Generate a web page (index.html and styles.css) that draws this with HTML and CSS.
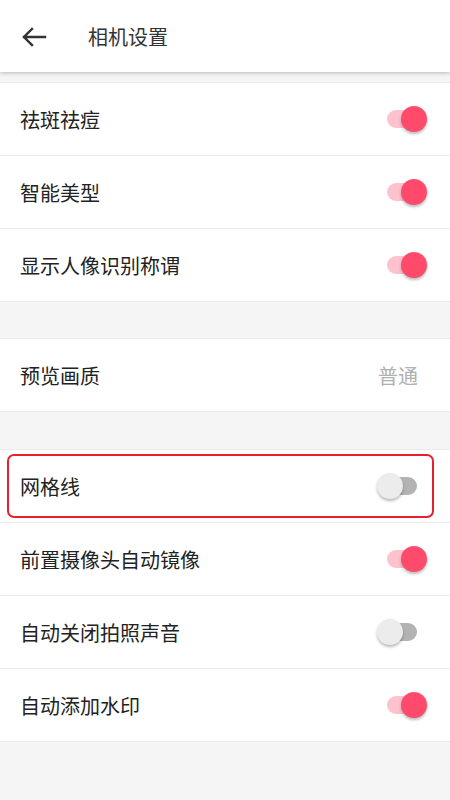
FILE: index.html
```html
<!DOCTYPE html>
<html lang="zh">
<head>
<meta charset="utf-8">
<link rel="stylesheet" href="styles.css">
</head>
<body>
<header class="bar">
  <svg class="back" width="26" height="20" viewBox="0 0 26 20"><path d="M2 10H23M10 2L2 10L10 18" fill="none" stroke="#333" stroke-width="2.4" stroke-linecap="square"/></svg>
  <span class="title">相机设置</span>
</header>
<section class="group first">
  <div class="row"><span class="label">祛斑祛痘</span><span class="sw on"><i></i></span></div>
  <div class="row"><span class="label">智能美型</span><span class="sw on"><i></i></span></div>
  <div class="row"><span class="label">显示人像识别称谓</span><span class="sw on"><i></i></span></div>
</section>
<section class="group">
  <div class="row"><span class="label">预览画质</span><span class="value">普通</span></div>
</section>
<section class="group third">
  <div class="row hl"><span class="label">网格线</span><span class="sw off"><i></i></span><span class="mark"></span></div>
  <div class="row"><span class="label">前置摄像头自动镜像</span><span class="sw on"><i></i></span></div>
  <div class="row"><span class="label">自动关闭拍照声音</span><span class="sw off"><i></i></span></div>
  <div class="row"><span class="label">自动添加水印</span><span class="sw on"><i></i></span></div>
</section>
</body>
</html>
```
FILE: styles.css
```css
html, body { margin: 0; padding: 0; }
body {
  width: 450px;
  min-height: 800px;
  background: #f5f5f5;
  font-family: "Noto Sans CJK SC", "Noto Sans", sans-serif;
  color: #222;
}
.bar {
  height: 72px;
  background: #fff;
  display: flex;
  align-items: center;
  box-shadow: 0 1px 4px rgba(0,0,0,0.25);
  position: relative;
  z-index: 2;
}
.back { margin-left: 22px; margin-top: 1px; }
.title { margin-left: 40px; font-size: 20px; color: #333; }
.group {
  background: #fff;
  border-top: 1px solid #ebebeb;
  margin-top: 36px;
}
.group.first { margin-top: 10px; }
.group.third { margin-top: 37px; }
.row {
  height: 72px;
  border-bottom: 1px solid #ebebeb;
  display: flex;
  align-items: center;
  justify-content: space-between;
  padding: 0 23px 0 20px;
  position: relative;
}
.label { font-size: 20px; color: #222; }
.value { font-size: 20px; color: #b0b0b0; margin-right: 9px; }
.sw {
  width: 50px;
  height: 26px;
  position: relative;
  display: block;
}
.sw::before {
  content: "";
  position: absolute;
  left: 10px;
  top: 4px;
  width: 30px;
  height: 18px;
  border-radius: 9px;
  background: #fcc3cf;
}
.sw i {
  position: absolute;
  top: 0;
  width: 26px;
  height: 26px;
  border-radius: 50%;
  background: #ff4a6b;
  box-shadow: 0 2px 3px rgba(0,0,0,0.28);
}
.sw.on i { right: 0; }
.sw.off::before { background: #b3b3b3; }
.sw.off i { left: 0; background: #ececec; }
.mark {
  position: absolute;
  left: 7px;
  right: 16px;
  top: 4px;
  bottom: 4px;
  border: 2px solid #e8202d;
  border-radius: 7px;
}
```
